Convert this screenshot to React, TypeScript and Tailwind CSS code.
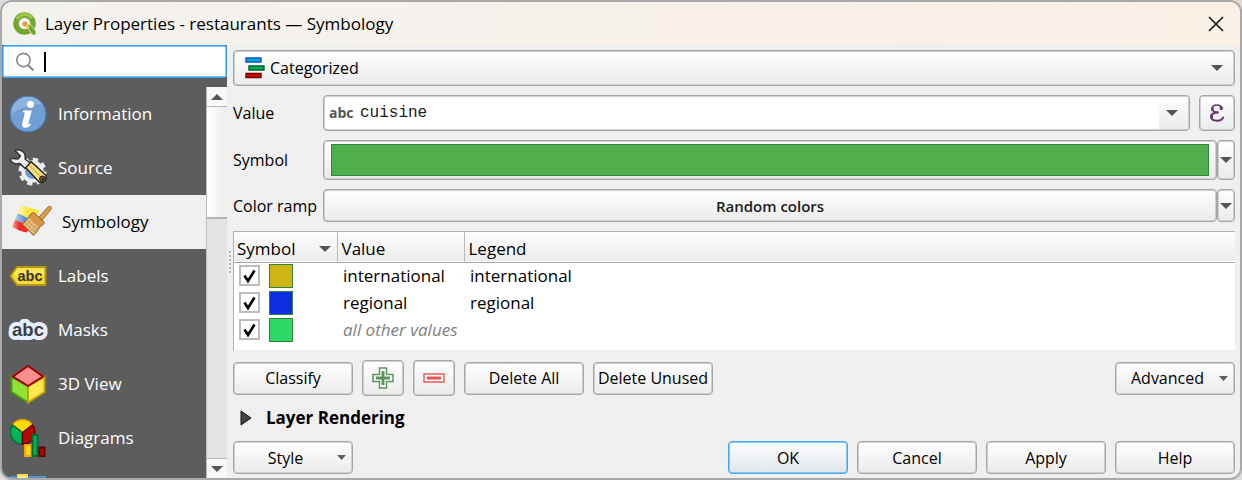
import React, { useState } from "react";

const SANS = "font-['Open_Sans','Noto_Sans',sans-serif]";
const FACE = "bg-linear-to-b from-[#fefefe] to-[#ebebeb]";
const EDGE = "rounded-[4px] border border-[#a6a6a6] shadow-[inset_0_0_0_1px_#cfcfcf]";

function Caret({ small = false }: { small?: boolean }) {
  return small ? (
    <svg width="9" height="5" viewBox="0 0 9 5" aria-hidden="true">
      <path d="M0 0h9L4.500 5z" fill="#5f5f5f" />
    </svg>
  ) : (
    <svg width="12" height="6" viewBox="0 0 12 6" aria-hidden="true">
      <path d="M0 0h12L6 6z" fill="#555" />
    </svg>
  );
}

function PushButton({ children, primary = false, className = "w-[120px]" }: { children: React.ReactNode; primary?: boolean; className?: string }) {
  const look = primary
    ? "rounded-[4px] border border-[#45a8f5] bg-linear-to-b from-[#fdfdfe] to-[#e1e7ec] shadow-[inset_0_0_0_1px_#86c6f8]"
    : `${EDGE} ${FACE}`;
  return (
    <button type="button" className={`h-[33px] shrink-0 whitespace-nowrap text-center text-base leading-5 ${look} ${className}`}>
      {children}
    </button>
  );
}

function MenuButton({ children }: { children: React.ReactNode }) {
  return (
    <PushButton className="flex w-[120px] items-center pr-1.5">
      <span className="flex-1 text-center">{children}</span>
      <Caret small />
    </PushButton>
  );
}

function SplitArrow({ label }: { label: string }) {
  return (
    <button type="button" aria-label={label} className={`flex w-[18px] shrink-0 items-center justify-center ${EDGE} ${FACE}`}>
      <Caret />
    </button>
  );
}

function InfoIcon() {
  return (
    <svg width="38" height="38" viewBox="0 0 38 38">
      <circle cx="19" cy="19" r="18" fill="#6f9fd3" stroke="#4671b0" />
      <path d="M2.500 20C2 9 10 2 19 2c6 0 11 3 13.500 7C24 10 9 12 2.500 20z" fill="#fff" opacity=".22" />
      <circle cx="21.500" cy="9.500" r="3.400" fill="#fff" />
      <path d="M14.500 15.500h8.200L19.500 28c-.4 1.700.8 1.600 2.800.2-.6 2.700-3.100 4.500-6.100 4.500-2.500 0-3.600-1.400-3-3.900l2.300-9.400c.4-1.600-.2-2.100-1.800-2.300z" fill="#fff" />
    </svg>
  );
}

function SourceIcon() {
  return (
    <svg width="38" height="38" viewBox="0 0 38 38">
      <g transform="translate(23.500 22.500)">
        <circle r="12.200" fill="none" stroke="#ededed" strokeWidth="3.600" strokeDasharray="5.200 4.380" />
        <circle r="9" fill="#6f9fd3" stroke="#ededed" strokeWidth="4.500" />
        <circle r="6.800" fill="#6f9fd3" stroke="#5b7fae" strokeWidth=".8" />
      </g>
      <path d="M16.500 18.500l5.500-6L37 26.500c1.200 3.500-2.500 8-6.500 7z" fill="#f3dc7c" stroke="#222" strokeWidth="1.400" strokeLinejoin="round" />
      <path d="M20 16l13 13" stroke="#d8bb55" strokeWidth="1.200" />
      <circle cx="33.500" cy="30" r="3" fill="#6b5a20" stroke="#222" />
      <circle cx="33.800" cy="30.300" r="1" fill="#111" />
      <path d="M6 1.500c4-1.500 9 .5 10 4.500.4 2 0 3.500 0 4l5 4-5 5.500-5-5c-4 .8-8-.3-10-4l3-1 5 .5 2.500-3z" fill="#f1f1f1" stroke="#2b2b2b" strokeWidth="1.300" strokeLinejoin="round" />
    </svg>
  );
}

function BrushIcon() {
  return (
    <svg width="40" height="34" viewBox="0 0 40 34">
      <defs>
        <linearGradient id="mapYellow"><stop offset="0" stopColor="#fdf6b0" /><stop offset=".5" stopColor="#fbe53c" /></linearGradient>
        <linearGradient id="mapBlue"><stop offset="0" stopColor="#b9d0ec" /><stop offset=".5" stopColor="#5f94d2" /></linearGradient>
        <linearGradient id="mapRed"><stop offset="0" stopColor="#f7a9a5" /><stop offset=".4" stopColor="#ee2a24" /></linearGradient>
      </defs>
      <path d="M10 1c6 0 10 3 18 4.500L21 15C14 13 11 9.500 5.500 8.500z" fill="url(#mapYellow)" />
      <path d="M5.500 8.500c5.500 1 8.500 4.500 15.500 6.500l-3 6C12 20 8 16 3 15z" fill="url(#mapBlue)" />
      <path d="M3 15c5 1 9 5 15 6l-3 6.500C10 27 5 24.500 0 22z" fill="url(#mapRed)" />
      <path d="M26.500 12.500L36 2c2-2 4.500.3 3 2.500L29.500 16z" fill="#dd9a45" stroke="#9a682b" strokeWidth=".9" />
      <path d="M19.500 8.500c1.500-1.500 3-.5 4.500 1l7 6.500c1.500 1.500 1.500 3-.5 4-2.500 1-4 4-5.500 6.500l-3.500 4L10.500 19.500z" fill="#d79645" stroke="#8f5f27" strokeWidth="1" />
      <path d="M11.500 19.500l5.500-6.500 9.500 9-5 7.500z" fill="#ebc48c" />
      <path d="M13.500 21.500l5.500-6.500M16 24l5.500-7M18.500 26.500l5.500-7M20.500 28.500l5-7M13 17.500l10 9.500M15 15.500l10 9" stroke="#b9853f" strokeWidth=".7" />
    </svg>
  );
}

function LabelsIcon() {
  return (
    <svg width="38" height="20" viewBox="0 0 38 20">
      <path d="M1.500 10L8 1h28.500v18H8z" fill="#f4da2e" stroke="#b3950c" strokeWidth="1.800" />
      <path d="M8.500 2.500H35v7H4z" fill="#fff07d" opacity=".5" />
      <text x="21" y="14.500" textAnchor="middle" fontFamily="Liberation Sans, sans-serif" fontWeight="700" fontSize="14.500" fill="#333">abc</text>
    </svg>
  );
}

function MasksIcon() {
  return (
    <svg width="42" height="24" viewBox="0 0 42 24">
      <text x="21" y="18" textAnchor="middle" fontFamily="Liberation Sans, sans-serif" fontWeight="700" fontSize="18.500" fill="#e8efff" stroke="#e8efff" strokeWidth="8" strokeLinejoin="round">abc</text>
      <text x="21" y="18" textAnchor="middle" fontFamily="Liberation Sans, sans-serif" fontWeight="700" fontSize="18.500" fill="#3b3f44">abc</text>
    </svg>
  );
}

function CubeIcon() {
  return (
    <svg width="36" height="40" viewBox="0 0 36 40">
      <path d="M1.500 13L18 21.500v17L1.500 28z" fill="#8ee236" stroke="#4e9a06" strokeWidth="2" />
      <path d="M34.500 13L18 21.500v17L34.500 28z" fill="#fce94f" stroke="#c4a000" strokeWidth="2" />
      <path d="M18 2l15 10.500L18 22 3 12.500z" fill="#f78f8f" stroke="#a40000" strokeWidth="2" />
    </svg>
  );
}

function DiagramsIcon() {
  return (
    <svg width="36" height="38" viewBox="0 0 36 38">
      <path d="M12.500 13.500L3 5.500a12 12 0 0 1 19 0z" fill="#ffdc00" stroke="#f5a800" strokeWidth="1.500" />
      <path d="M12.500 13.500V25A12 12 0 0 1 2.500 6z" fill="#00b35a" stroke="#006b33" strokeWidth="1.500" />
      <path d="M12.500 13.500V25A12 12 0 0 0 22.500 6z" fill="#b40a00" stroke="#6d0000" strokeWidth="1.500" />
      <path d="M15 26h6v11h-6z" fill="#ffdc00" stroke="#f5a21a" strokeWidth="2" />
      <path d="M22.500 16h5v21h-5z" fill="#00b35a" stroke="#006b33" strokeWidth="2" />
      <path d="M29.500 28.500h5V37h-5z" fill="#b40a00" stroke="#6d0000" strokeWidth="2" />
    </svg>
  );
}

function FieldsIcon() {
  return (
    <svg width="36" height="38" viewBox="0 0 36 38">
      <path d="M1 4h34v33H1z" fill="#a9cdf3" stroke="#5d8fc9" strokeWidth="2" />
      <path d="M8 2h9v34H8z" fill="#f7f3a0" stroke="#f0e43c" strokeWidth="2" />
    </svg>
  );
}

const pages = [
  { name: "Information", icon: <InfoIcon /> },
  { name: "Source", icon: <SourceIcon /> },
  { name: "Symbology", icon: <BrushIcon /> },
  { name: "Labels", icon: <LabelsIcon /> },
  { name: "Masks", icon: <MasksIcon /> },
  { name: "3D View", icon: <CubeIcon /> },
  { name: "Diagrams", icon: <DiagramsIcon /> },
  { name: "Fields", icon: <FieldsIcon />, iconOnly: true },
];

function Sidebar() {
  const [active, setActive] = useState("Symbology");
  return (
    <aside className="flex w-[225px] shrink-0 flex-col bg-[#5d5d5d]">
      <label className="flex h-[33px] shrink-0 items-center gap-[9px] rounded-[3px] border border-[#3a9ff2] bg-white pl-3 shadow-[inset_0_0_0_1px_#7cc1f8]">
        <svg width="20" height="20" viewBox="0 0 20 20" fill="none" stroke="#8b8b8b" aria-hidden="true">
          <circle cx="8.500" cy="8" r="6.700" strokeWidth="1.700" />
          <path d="M13 13l5.500 5.500" strokeWidth="2.200" />
        </svg>
        <span aria-hidden="true" className="h-5 w-0.5 bg-black" />
        <input aria-label="Search" className="min-w-0 flex-1 bg-transparent text-base outline-none" />
      </label>
      <div className="mt-[9px] flex min-h-0 flex-1 items-stretch">
        <nav className="flex-1 overflow-hidden">
          {pages.map((p) => {
            const on = p.name === active;
            return (
              <button
                key={p.name}
                type="button"
                aria-label={p.name}
                onClick={() => setActive(p.name)}
                className={`flex h-[54px] w-full items-center text-left text-[17px] leading-6 ${on ? "bg-[#efefef] pl-1 text-black" : "text-white"}`}
              >
                <span className="flex w-[52px] shrink-0 justify-center">{p.icon}</span>
                {p.iconOnly ? null : <span className="pl-1">{p.name}</span>}
              </button>
            );
          })}
        </nav>
        <div className="flex w-[21px] flex-col border-l border-[#bdbdbd] bg-[#e4e4e4]">
          <button type="button" aria-label="Scroll up" className="flex h-5 shrink-0 items-center justify-center border-b border-[#b5b5b5] bg-[#f8f8f8]">
            <svg width="12" height="6" viewBox="0 0 12 6"><path d="M0 6h12L6 0z" fill="#555" /></svg>
          </button>
          <div className="min-h-0 flex-1">
            <div className="h-[32%] border-b-2 border-[#b5b5b5] bg-linear-to-r from-white to-[#ececec]" />
          </div>
          <button type="button" aria-label="Scroll down" className="flex h-5 shrink-0 items-center justify-center border-t border-[#b5b5b5] bg-[#f8f8f8]">
            <Caret />
          </button>
        </div>
      </div>
    </aside>
  );
}

const rows = [
  { value: "international", legend: "international", color: "bg-[#cfb414]" },
  { value: "regional", legend: "regional", color: "bg-[#0c2fe0]" },
  { value: "all other values", legend: "", color: "bg-[#2dd867]", other: true },
];

function Categories() {
  return (
    <div className="min-h-0 flex-1 overflow-hidden border-t border-l border-[#b0b0b0] bg-white">
      <table className="w-full table-fixed border-collapse text-left text-[17px] leading-6">
        <thead>
          <tr className="h-[30px] border-b border-[#a6a6a6] bg-linear-to-b from-[#fdfdfd] to-[#ececec]">
            <th className="w-[103px] border-r border-[#bcbcbc] pt-1 pl-[3px] font-normal">
              <span className="flex items-center justify-between pr-1.5">Symbol <Caret /></span>
            </th>
            <th className="w-[127px] border-r border-[#bcbcbc] pt-1 pl-1 font-normal">Value</th>
            <th className="pt-1 pl-1 font-normal">Legend</th>
          </tr>
        </thead>
        <tbody>
          {rows.map((r) => (
            <tr key={r.value} className="h-[27px]">
              <td className="pl-[5px]">
                <span className="flex items-center gap-[9px]">
                  <span className="grid">
                    <input type="checkbox" defaultChecked aria-label={`Show ${r.value}`} className="peer col-start-1 row-start-1 size-[21px] appearance-none border-2 border-[#bcbcbc] bg-white" />
                    <svg viewBox="0 0 21 21" aria-hidden="true" className="pointer-events-none invisible col-start-1 row-start-1 size-[21px] peer-checked:visible">
                      <path d="M5.500 10.500l3.500 5.500 6.500-10.500" fill="none" stroke="#000" strokeWidth="2.600" />
                    </svg>
                  </span>
                  <span className={`size-6 border border-[#33803a] ${r.color}`} />
                </span>
              </td>
              <td className={`whitespace-nowrap pl-1.5 ${r.other ? "text-[#808080] italic" : ""}`}>{r.value}</td>
              <td className="pl-1.5">{r.legend}</td>
            </tr>
          ))}
        </tbody>
      </table>
    </div>
  );
}

export default function App() {
  return (
    <div className="h-screen bg-[#dcdcdc]">
      <div className={`flex h-full flex-col overflow-hidden rounded-[12px] border-2 border-[#a9a9a9] bg-[#efefef] text-black ${SANS}`}>
        <header className="flex h-[43px] shrink-0 items-center bg-linear-to-r from-[#f4f2ef] to-[#faf0e6] pr-4 pl-[11px]">
          <svg width="24" height="24" viewBox="0 0 24 24" aria-hidden="true">
            <circle cx="11.500" cy="11.500" r="8.500" fill="none" stroke="#74a52f" strokeWidth="5.500" />
            <path d="M4 7a9 9 0 0 1 15-1" fill="none" stroke="#9bc94a" strokeWidth="3" />
            <path d="M13 13l4-1 6 7v4h-4z" fill="#74a52f" stroke="#f4f2ef" strokeWidth=".8" />
            <circle cx="12" cy="12" r="2.500" fill="#f0923a" />
            <path d="M13 13l3 3" stroke="#f6c451" strokeWidth="2.500" />
          </svg>
          <h1 className="flex-1 pl-2 text-[17px] leading-6 font-normal">Layer Properties - restaurants — Symbology</h1>
          <button type="button" aria-label="Close">
            <svg width="16" height="16" viewBox="0 0 16 16"><path d="M1 1l14 14M15 1L1 15" stroke="#111" strokeWidth="1.500" /></svg>
          </button>
        </header>
        <div className="flex min-h-0 flex-1">
          <Sidebar />
          <div className="flex w-1.5 shrink-0 flex-col items-center justify-center gap-0.5">
            {[0, 1, 2, 3, 4, 5].map((n) => (
              <span key={n} className="size-0.5 bg-[#b5b5b5]" />
            ))}
          </div>
          <main className="flex min-w-0 flex-1 flex-col pt-[5px] pr-[5px] pb-1 text-base leading-5">
            <div className="relative">
              <select aria-label="Renderer" className={`h-9 w-full appearance-none pl-9 ${EDGE} ${FACE}`}>
                <option>Categorized</option>
              </select>
              <svg width="20" height="22" viewBox="0 0 20 22" aria-hidden="true" className="pointer-events-none absolute top-[7px] left-3">
                <path d="M1 1h15v4H1z" fill="#00aebf" stroke="#1550c8" strokeWidth="1.400" />
                <path d="M4 9h15v4H4z" fill="#00b35a" stroke="#00602c" strokeWidth="1.400" />
                <path d="M1 16.500h15v4H1z" fill="#c00f00" stroke="#7b0000" strokeWidth="1.400" />
              </svg>
              <span className="pointer-events-none absolute inset-y-0 right-3 flex items-center"><Caret /></span>
            </div>

            <div className="mt-[9px] flex items-center">
              <label htmlFor="field" className="w-[90px] shrink-0">Value</label>
              <div className="relative min-w-0 flex-1">
                <select id="field" className={`h-9 w-full appearance-none bg-white pl-9 font-['Liberation_Mono',monospace] text-[#1c1c1c] ${EDGE}`}>
                  <option>cuisine</option>
                </select>
                <span aria-hidden="true" className="pointer-events-none absolute inset-y-0 left-1.5 flex items-center text-sm font-bold text-[#555]">abc</span>
                <span className={`pointer-events-none absolute inset-y-0.5 right-0.5 flex w-[29px] items-center justify-center rounded-r-[2px] pr-1 ${FACE}`}><Caret /></span>
              </div>
              <button type="button" aria-label="Expression" className={`ml-[9px] flex size-9 shrink-0 items-center justify-center ${EDGE} ${FACE}`}>
                <svg width="16" height="18" viewBox="0 0 16 18" fill="none" stroke="#63376b">
                  <path d="M13 4C12 2 10.500 1 8 1 5 1 3.200 2.600 3.200 4.800c0 2.200 2 3.500 6.300 3.500" strokeWidth="1.700" />
                  <path d="M9.500 8.500C4.500 8.500 2.200 10 2.200 12.600 2.200 15.300 4.500 16.800 8 16.800c3.500 0 5.700-1.500 6.500-4" strokeWidth="2" />
                  <path d="M3.400 3.400v3M2.600 11v3.500" strokeWidth="2.600" />
                  <circle cx="12.300" cy="4.300" r="1.300" fill="#63376b" />
                </svg>
              </button>
            </div>

            <div className="mt-[9px] flex items-center">
              <span className="w-[90px] shrink-0">Symbol</span>
              <div className="flex h-10 min-w-0 flex-1">
                <button type="button" aria-label="Change symbol" className={`min-w-0 flex-1 px-[7px] py-[3px] ${EDGE} ${FACE}`}>
                  <span className="block h-full border border-[#35863a] bg-[#4eae4b]" />
                </button>
                <SplitArrow label="Symbol options" />
              </div>
            </div>

            <div className="mt-[9px] flex items-center">
              <span className="w-[90px] shrink-0">Color ramp</span>
              <div className="flex h-[33px] min-w-0 flex-1">
                <button type="button" className={`min-w-0 flex-1 text-center text-[15px] font-semibold text-[#1c1c1c] ${EDGE} ${FACE}`}>Random colors</button>
                <SplitArrow label="Color ramp options" />
              </div>
            </div>

            <div className="mt-[9px] flex min-h-0 flex-1 flex-col">
              <Categories />
            </div>

            <div className="mt-[10px] flex items-center gap-[9px]">
              <PushButton>Classify</PushButton>
              <button type="button" aria-label="Add category" className={`flex h-9 w-[42px] items-center justify-center ${EDGE} ${FACE}`}>
                <svg width="22" height="22" viewBox="0 0 22 22">
                  <path d="M7.500 1h7v6.500H21v7h-6.500V21h-7v-6.500H1v-7h6.500z" fill="#fff" stroke="#5d9460" strokeWidth="1.500" />
                  <path d="M11 4v14M4 11h14" stroke="#5d9460" strokeWidth="3" />
                </svg>
              </button>
              <button type="button" aria-label="Remove category" className={`flex h-9 w-[42px] items-center justify-center ${EDGE} ${FACE}`}>
                <svg width="22" height="10" viewBox="0 0 22 10">
                  <path d="M1 1h20v8H1z" fill="#fff" stroke="#ee5c5c" strokeWidth="1.500" />
                  <path d="M4 5h14" stroke="#ee5050" strokeWidth="3" />
                </svg>
              </button>
              <PushButton>Delete All</PushButton>
              <PushButton>Delete Unused</PushButton>
              <span className="flex-1" />
              <MenuButton>Advanced</MenuButton>
            </div>

            <button type="button" aria-expanded="false" className="mt-[10px] flex h-6 items-center gap-[14px] pl-[7px] text-left text-[17px] font-bold">
              <svg width="12" height="16" viewBox="0 0 12 16"><path d="M1 1l10 7-10 7z" fill="#444" stroke="#111" /></svg>
              Layer Rendering
            </button>

            <footer className="mt-[11px] flex gap-[9px]">
              <MenuButton>Style</MenuButton>
              <span className="flex-1" />
              <PushButton primary>OK</PushButton>
              <PushButton>Cancel</PushButton>
              <PushButton>Apply</PushButton>
              <PushButton>Help</PushButton>
            </footer>
          </main>
        </div>
      </div>
    </div>
  );
}
